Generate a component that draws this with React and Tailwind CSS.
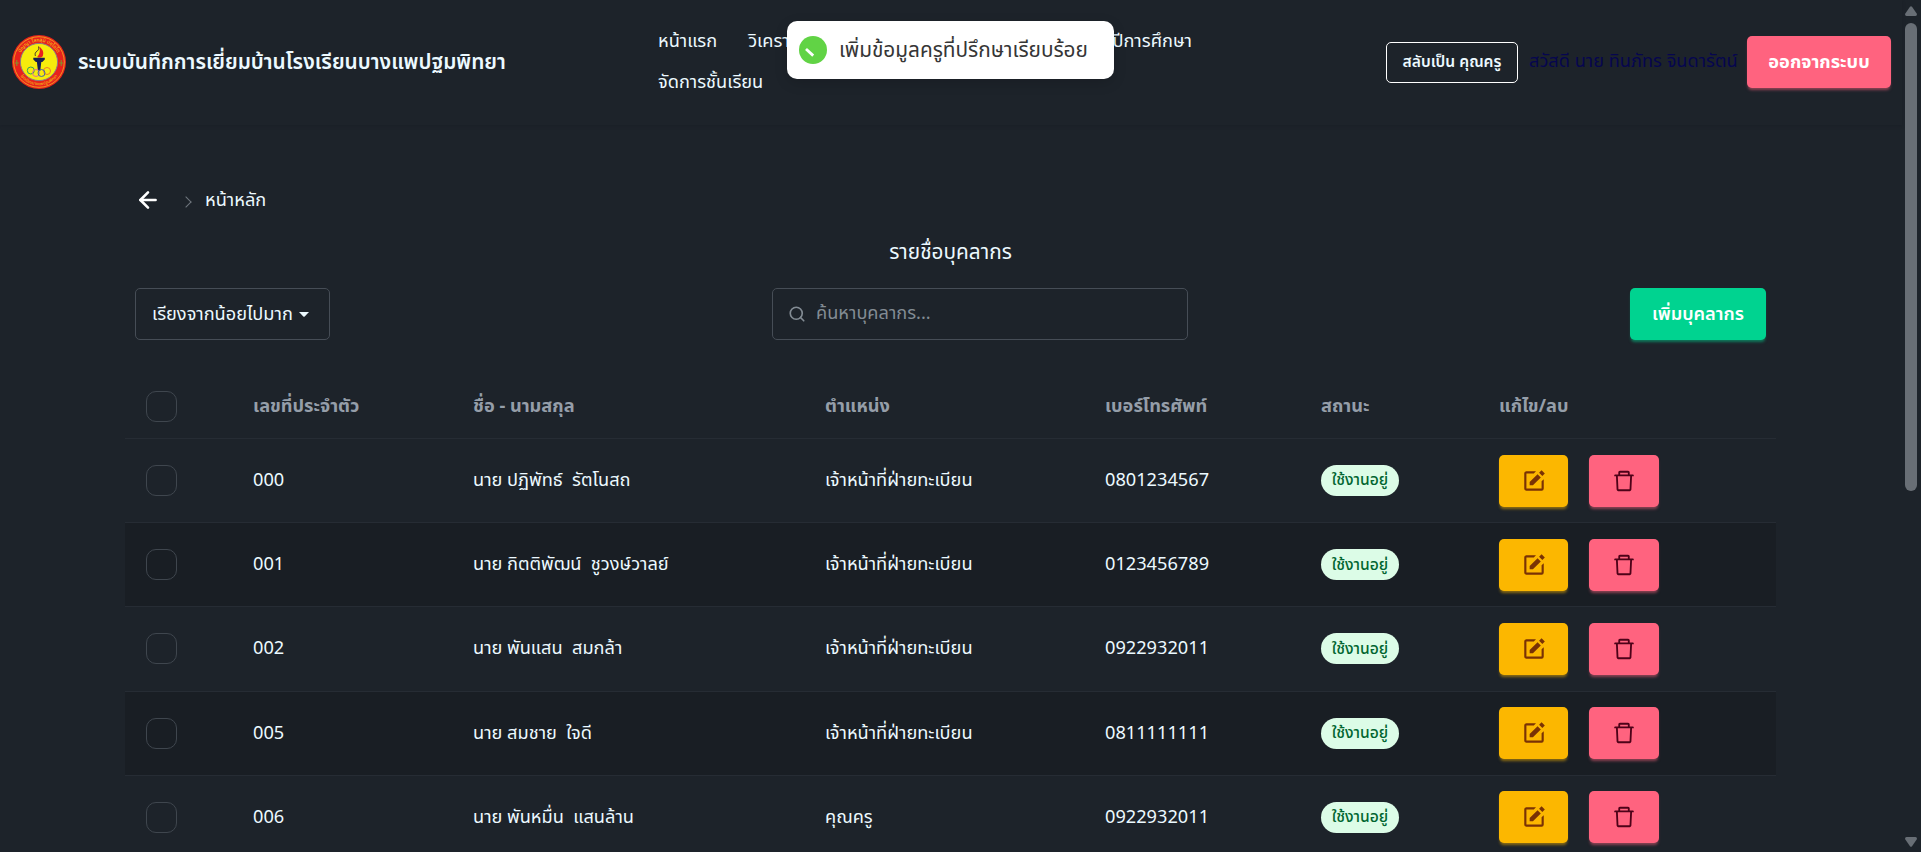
import { BiSolidEdit } from "react-icons/bi";
import { AiOutlineDelete } from "react-icons/ai";
import { ArrowLeft, Search } from "lucide-react";

const rows = [
  { id: "000", name: "นาย ปฏิพัทธ์\u00a0 รัตโนสถ", role: "เจ้าหน้าที่ฝ่ายทะเบียน", phone: "0801234567" },
  { id: "001", name: "นาย กิตติพัฒน์\u00a0 ชูวงษ์วาลย์", role: "เจ้าหน้าที่ฝ่ายทะเบียน", phone: "0123456789" },
  { id: "002", name: "นาย พันแสน\u00a0 สมกล้า", role: "เจ้าหน้าที่ฝ่ายทะเบียน", phone: "0922932011" },
  { id: "005", name: "นาย สมชาย\u00a0 ใจดี", role: "เจ้าหน้าที่ฝ่ายทะเบียน", phone: "0811111111" },
  { id: "006", name: "นาย พันหมื่น\u00a0 แสนล้าน", role: "คุณครู", phone: "0922932011" },
];

const columns = "grid grid-cols-[128px_220px_352px_280px_216px_178px_277px] items-center";

function Logo() {
  return (
    <svg viewBox="0 0 54 54" className="size-[54px] shrink-0">
      <defs>
        <path id="arc-top" d="M6.6 27a20.4 20.4 0 0 1 40.8 0" />
        <path id="arc-bottom" d="M3.8 27a23.2 23.2 0 0 0 46.4 0" />
      </defs>
      <circle cx="27" cy="27" r="27" fill="#e8211d" />
      <circle cx="27" cy="27" r="25.3" fill="none" stroke="#f2a51c" strokeWidth="0.9" />
      <circle cx="27" cy="27" r="18.6" fill="#f6ec0c" stroke="#8a7d86" strokeWidth="1" />
      <text fontSize="5" fill="#f6d312" textAnchor="middle">
        <textPath href="#arc-top" startOffset="50%">ปัญญา โลกสฺมิ ปชฺโชโต</textPath>
      </text>
      <text fontSize="4.2" fill="#f6d312" textAnchor="middle">
        <textPath href="#arc-bottom" startOffset="50%">โรงเรียนบางแพปฐมพิทยา</textPath>
      </text>
      <path d="M2.8 28h4M4.8 25v6M47.2 28h4M49.2 25v6" stroke="#7f9a2c" strokeWidth="1" />
      <path d="M27.2 11.5c3.5 3 5 5.400 3.600 9.500-1 1.600-4.200 2-5.600 1 2.800-3 3.200-6 2-10.500z" fill="#e8211d" />
      <path d="M26.500 11.500c1 2.500-.5 4-2.500 5.500-1.200 1.200-1 2.500-.6 4" fill="none" stroke="#3a2a30" strokeWidth="0.900" />
      <path d="M21.300 22.800h11.500v1.600l-2.500 2.600h-1l-1 8.500h-2.400l-1-8.500h-1l-2.600-2.600z" fill="#141f52" />
      <g fill="none" strokeWidth="1">
        <circle cx="18.800" cy="35.500" r="3.500" stroke="#2fa25a" />
        <circle cx="35" cy="36" r="3.500" stroke="#ee7a2d" />
        <circle cx="24" cy="38" r="3.500" stroke="#e36c9a" />
        <circle cx="29.500" cy="38" r="3.500" stroke="#4464ac" />
      </g>
    </svg>
  );
}

function Checkbox() {
  return <div className="ml-[21px] size-[31px] rounded-[10px] border border-[#3f464e]" />;
}

function Header() {
  return (
    <header className="flex h-[125px] shrink-0 items-center pr-[11px] pb-px pl-3 shadow-[0_1px_3px_rgba(20,22,34,0.35)]">
      <div className="flex w-[646px] items-center gap-[12px]">
        <Logo />
        <h1 className="text-[20.800px] font-semibold whitespace-nowrap">ระบบบันทึกการเยี่ยมบ้านโรงเรียนบางแพปฐมพิทยา</h1>
      </div>
      <nav className="flex w-[534px] flex-wrap gap-y-[10px] pb-[3px] text-[18.200px] leading-[31px]">
        <a className="mr-[31px]">หน้าแรก</a>
        <a>วิเครา</a>
        <a className="ml-auto">ปีการศึกษา</a>
        <a className="w-full">จัดการชั้นเรียน</a>
      </nav>
      <div className="ml-auto flex items-center gap-[11px]">
        <button className="h-[41px] w-[132px] rounded-[5px] border border-white text-[15.600px] font-semibold">สลับเป็น คุณครู</button>
        <span className="w-[207px] pb-[3px] text-[18.200px] whitespace-nowrap text-[#06064f]">สวัสดี นาย ทินภัทร จินดารัตน์</span>
        <button className="h-[52px] w-[144px] rounded-[5px] bg-[#ff637f] text-[18.200px] font-bold text-white shadow-[0_3px_3px_-1px_rgba(255,99,127,0.5)]">ออกจากระบบ</button>
      </div>
    </header>
  );
}

function Toast() {
  return (
    <div className="absolute top-[21px] left-[787px] flex h-[58px] w-[327px] items-center rounded-[10px] bg-white pl-3 shadow-[0_4px_13px_rgba(0,0,0,0.15)]">
      <svg viewBox="0 0 28 28" className="size-7">
        <circle cx="14" cy="14" r="14" fill="#61d345" />
        <path d="M7 13l7.200 6.600" stroke="#fff" strokeWidth="2.800" />
      </svg>
      <span className="ml-[12px] text-[20.800px] whitespace-nowrap text-[#363636]">เพิ่มข้อมูลครูที่ปรึกษาเรียบร้อย</span>
    </div>
  );
}

function Scrollbar() {
  return (
    <div className="flex w-[19px] shrink-0 flex-col items-center justify-between pt-[6px] pr-px pb-[5px]">
      <div className="flex flex-col items-center gap-[7px]">
        <svg viewBox="0 0 12 10" className="h-[10px] w-3"><path d="M5 .7q1-1 2 0l5 7.300q0 2-1.500 2h-9q-1.500 0-1.500-2z" fill="#686e75" /></svg>
        <div className="h-[468px] w-3 rounded-full bg-[#686e75]" />
      </div>
      <svg viewBox="0 0 12 10" className="h-[10px] w-3"><path d="M5 9.300q1 1 2 0l5-7.300q0-2-1.500-2h-9q-1.500 0-1.500 2z" fill="#686e75" /></svg>
    </div>
  );
}

export default function App() {
  return (
    <div className="relative flex h-[852px] overflow-hidden bg-[#1d232a] font-['Noto_Sans','Noto_Sans_Thai',sans-serif] text-[18.200px] text-[#ecf9ff]">
      <div className="flex min-w-0 flex-1 flex-col">
        <Header />
        <main className="pl-[125px]">
          <div className="mt-[60px] flex h-[30px] items-center pl-[10px]">
            <ArrowLeft size={26} strokeWidth={2.400} className="text-white" />
            <span className="mt-[3px] ml-[21px] size-[8px] rotate-45 border-t border-r border-[#70777e]" />
            <span className="ml-[15px]">หน้าหลัก</span>
          </div>
          <h2 className="mt-[20px] w-[1651px] text-center text-[20.800px] leading-[32px]">รายชื่อบุคลากร</h2>
          <div className="mt-[21px] flex w-[1641px] items-center pl-[10px]">
            <button className="flex h-[52px] w-[195px] items-center rounded-[5px] border border-[#464d56] pb-px pl-[16px]">
              <span className="whitespace-nowrap">เรียงจากน้อยไปมาก</span>
              <svg viewBox="0 0 10 5" className="mt-[2px] ml-[6px] h-[5px] w-[10px]"><path d="M0 0h10L5.700 4.500q-.7.600-1.400 0z" fill="#ecf9ff" /></svg>
            </button>
            <div className="ml-[442px] flex h-[52px] w-[416px] items-center rounded-[5px] border border-[#464d56] pl-[15px] text-[#838c94]">
              <Search size={18} strokeWidth={2.200} />
              <span className="ml-[10px] pb-[2px]">ค้นหาบุคลากร...</span>
            </div>
            <button className="ml-auto h-[52px] w-[136px] rounded-[5px] bg-[#00d390] font-semibold text-white shadow-[0_3px_3px_-1px_rgba(0,211,144,0.5)]">เพิ่มบุคลากร</button>
          </div>
          <div className="mt-[33px] w-[1651px]">
            <div className={`${columns} h-[66px] border-b border-[#262c34] pt-px font-bold text-[#959ea9]`}>
              <Checkbox />
              <span>เลขที่ประจำตัว</span>
              <span>ชื่อ - นามสกุล</span>
              <span>ตำแหน่ง</span>
              <span>เบอร์โทรศัพท์</span>
              <span>สถานะ</span>
              <span>แก้ไข/ลบ</span>
            </div>
            {rows.map((r) => (
              <div key={r.id} className={`${columns} h-[84.200px] border-b border-[#262c34] even:bg-[#1d232a] odd:bg-[#191e24]`}>
                <Checkbox />
                <span className="pb-[2px]">{r.id}</span>
                <span className="pb-[2px]">{r.name}</span>
                <span className="pb-[2px]">{r.role}</span>
                <span className="pb-[2px]">{r.phone}</span>
                <span className="flex h-[31px] w-[78px] items-center justify-center rounded-full bg-[#dcfce7] pb-px text-[15.600px] font-medium text-[#016630]">ใช้งานอยู่</span>
                <div className="flex gap-[21px]">
                  <button className="flex h-[52px] w-[69px] items-center justify-center rounded-[5px] bg-[#fcb700] text-[#793205] shadow-[0_3px_3px_-1px_rgba(252,183,0,0.5)]">
                    <BiSolidEdit size={26} />
                  </button>
                  <button className="flex h-[52px] w-[70px] items-center justify-center rounded-[5px] bg-[#ff637f] text-[#4d0218] shadow-[0_3px_3px_-1px_rgba(255,99,127,0.5)]">
                    <AiOutlineDelete size={26} />
                  </button>
                </div>
              </div>
            ))}
          </div>
        </main>
      </div>
      <Scrollbar />
      <Toast />
    </div>
  );
}
